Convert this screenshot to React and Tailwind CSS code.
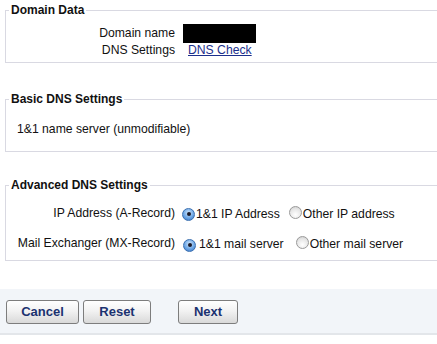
import React from "react";

function Radio({ checked }) {
  return checked ? (
    <span className="inline-flex items-center justify-center w-[13px] h-[13px] rounded-full border border-[#3a6fb0] bg-[radial-gradient(circle_at_50%_35%,#cfe6fb_0%,#6fa8e6_55%,#2f6fc2_100%)] shrink-0">
      <span className="w-[4px] h-[4px] rounded-full bg-[#1a1a2a]" />
    </span>
  ) : (
    <span className="inline-block w-[13px] h-[13px] rounded-full border border-[#9a9a9a] bg-[radial-gradient(circle_at_50%_70%,#ffffff_0%,#e6e6e6_60%,#c8c8c8_100%)] shrink-0" />
  );
}

function Btn({ children, w }) {
  return (
    <button
      className={`${w} h-[24px] rounded-[3px] border border-[#7d7d7d] bg-[linear-gradient(#ffffff,#f2f2f2_45%,#d9d9d9)] text-[13px] font-bold text-[#1b3270] leading-none`}
    >
      {children}
    </button>
  );
}

export default function App() {
  return (
    <div className="w-[437px] h-[344px] bg-white overflow-hidden text-[12.2px] text-[#111] font-['Liberation_Sans',Arial,sans-serif]">
      <fieldset className="ml-[5px] mt-[3px] border border-r-0 border-[#d9d9e2] pb-[5px]">
        <legend className="ml-[3px] px-[2px] font-bold leading-[14px] text-[12px]">Domain Data</legend>
        <div className="grid grid-cols-[169px_1fr] gap-x-[8px] mt-[7px]">
          <div className="text-right leading-[19px]">Domain name</div>
          <div>
            <div className="w-[73px] h-[19px] bg-black" />
          </div>
          <div className="text-right leading-[14px]">DNS Settings</div>
          <div className="leading-[14px]">
            <a href="#" className="ml-[5px] text-[#1c2f8c] underline">DNS Check</a>
          </div>
        </div>
      </fieldset>

      <fieldset className="ml-[5px] mt-[29px] border border-r-0 border-[#d9d9e2] pb-[15px]">
        <legend className="ml-[3px] px-[2px] font-bold leading-[14px] text-[12px]">Basic DNS Settings</legend>
        <div className="pl-[11px] mt-[16px] leading-[14px]">1&amp;1 name server (unmodifiable)</div>
      </fieldset>

      <fieldset className="ml-[5px] mt-[26px] border border-r-0 border-[#d9d9e2] pb-[8px]">
        <legend className="ml-[3px] px-[2px] font-bold leading-[14px] text-[12px]">Advanced DNS Settings</legend>
        <div className="grid grid-cols-[169px_1fr] gap-x-[7px] gap-y-[14px] mt-[14px] leading-[14px]">
          <div className="text-right">IP Address (A-Record)</div>
          <div className="flex items-center">
            <Radio checked />
            <span className="ml-[1px]">1&amp;1 IP Address</span>
            <span className="ml-[9px]"><Radio /></span>
            <span className="ml-[1px]">Other IP address</span>
          </div>
          <div className="text-right">Mail Exchanger (MX-Record)</div>
          <div className="flex items-center">
            <span className="ml-[1px]"><Radio checked /></span>
            <span className="ml-[3px]">1&amp;1 mail server</span>
            <span className="ml-[12px]"><Radio /></span>
            <span className="ml-[1px]">Other mail server</span>
          </div>
        </div>
      </fieldset>

      <div className="mt-[28px] h-[46px] bg-[#f2f5f9] border-b-2 border-[#e3e6ea] flex items-center pl-[6px] pt-[1px]">
        <Btn w="w-[73px]">Cancel</Btn>
        <span className="ml-[4px]"><Btn w="w-[68px]">Reset</Btn></span>
        <span className="ml-[27px]"><Btn w="w-[60px]">Next</Btn></span>
      </div>
    </div>
  );
}
